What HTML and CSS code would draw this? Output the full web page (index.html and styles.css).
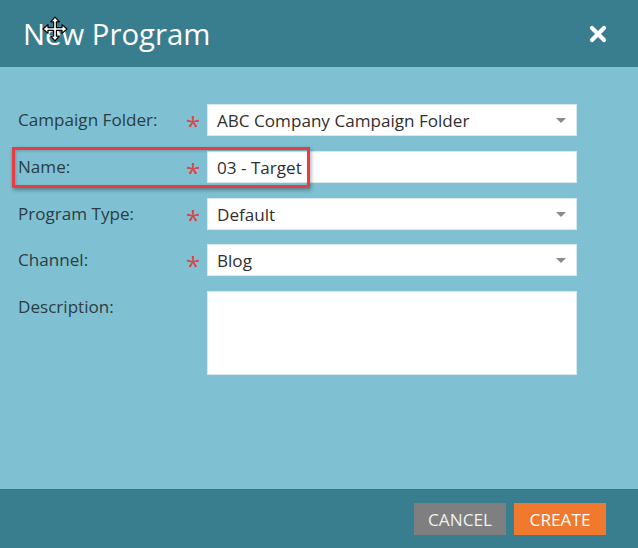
FILE: index.html
```html
<!DOCTYPE html>
<html>
<head>
<meta charset="utf-8">
<link rel="stylesheet" href="styles.css">
</head>
<body>
<div class="dialog">
  <div class="header">
    <h1 class="title">New Program</h1>
    <svg class="close" viewBox="0 0 18 18" width="18" height="18"><path d="M3 3 L15 15 M15 3 L3 15" stroke="#fff" stroke-width="4.2" stroke-linecap="round"/></svg>
    <svg class="cursor" viewBox="0 0 24 24" width="26" height="26">
      <path d="M12 1 L16 5.5 L13.3 5.5 L13.3 10.7 L18.5 10.7 L18.5 8 L23 12 L18.5 16 L18.5 13.3 L13.3 13.3 L13.3 18.5 L16 18.5 L12 23 L8 18.5 L10.7 18.5 L10.7 13.3 L5.5 13.3 L5.5 16 L1 12 L5.5 8 L5.5 10.7 L10.7 10.7 L10.7 5.5 L8 5.5 Z" fill="#fff" stroke="#000" stroke-width="1.1" stroke-linejoin="round"/>
    </svg>
  </div>
  <div class="body">
    <div class="row">
      <label class="label">Campaign Folder:</label>
      <span class="req">*</span>
      <div class="field select">ABC Company Campaign Folder<span class="arrow"></span></div>
    </div>
    <div class="row name-row">
      <label class="label">Name:</label>
      <span class="req">*</span>
      <div class="field">03 - Target</div>
      <div class="highlight"></div>
    </div>
    <div class="row">
      <label class="label">Program Type:</label>
      <span class="req">*</span>
      <div class="field select">Default<span class="arrow"></span></div>
    </div>
    <div class="row">
      <label class="label">Channel:</label>
      <span class="req">*</span>
      <div class="field select">Blog<span class="arrow"></span></div>
    </div>
    <div class="row desc-row">
      <label class="label">Description:</label>
      <span class="req"></span>
      <div class="field textarea"></div>
    </div>
  </div>
  <div class="footer">
    <button class="btn cancel">CANCEL</button>
    <button class="btn create">CREATE</button>
  </div>
</div>
</body>
</html>
```
FILE: styles.css
```css
html, body {
  margin: 0;
  padding: 0;
}
body {
  font-family: "Open Sans", "Liberation Sans", sans-serif;
  background: #7fc1d2;
}
.dialog {
  width: 638px;
  height: 548px;
  display: flex;
  flex-direction: column;
  background: #7fc1d2;
}
.header {
  position: relative;
  height: 67px;
  background: #387e8f;
  display: flex;
  align-items: center;
  justify-content: space-between;
  padding: 0 31px 0 23px;
  box-sizing: border-box;
}
.title {
  margin: 0;
  font-weight: 400;
  font-size: 29.3px;
  color: #fff;
  line-height: 1;
  padding-top: 2px;
}
.close {
  display: block;
}
.cursor {
  position: absolute;
  left: 42px;
  top: 16px;
}
.body {
  flex: 1;
  padding: 37px 61px 0 18px;
  display: flex;
  flex-direction: column;
  gap: 14.8px;
}
.row {
  position: relative;
  display: grid;
  grid-template-columns: 168px 21px 1fr;
  align-items: start;
}
.label {
  font-size: 17.1px;
  color: #2b3d42;
  line-height: 32px;
  margin-top: 0;
}
.req {
  color: #d9474a;
  font-size: 26px;
  line-height: 36px;
  height: 36px;
  margin-top: 3px;
  margin-bottom: -7px;
}
.field {
  position: relative;
  height: 32px;
  background: #fff;
  border: 1px solid #d4eaf0;
  box-sizing: border-box;
  font-size: 17.1px;
  color: #2f2f2f;
  line-height: 31px;
  padding-left: 9px;
}
.arrow {
  position: absolute;
  right: 10px;
  top: 13px;
  width: 0;
  height: 0;
  border-left: 5px solid transparent;
  border-right: 5px solid transparent;
  border-top: 5px solid #8a8a8a;
}
.textarea {
  height: 84px;
}
.highlight {
  position: absolute;
  left: -6px;
  top: -4px;
  width: 298px;
  height: 41px;
  border: 3px solid #ea3b43;
  box-sizing: border-box;
  box-shadow: 1px 2px 4px rgba(0, 0, 0, 0.35), inset 1px 1px 3px rgba(0, 0, 0, 0.2);
  pointer-events: none;
}
.footer {
  height: 59px;
  background: #387e8f;
  border-top: 1px solid #33788a;
  box-sizing: border-box;
  display: flex;
  justify-content: flex-end;
  align-items: flex-start;
  gap: 8px;
  padding: 13px 32px 0 0;
}
.btn {
  width: 92px;
  height: 32px;
  border: none;
  font-family: "Open Sans", "Liberation Sans", sans-serif;
  font-size: 17.2px;
  color: #fff;
  padding: 0;
}
.cancel {
  background: #7f7f7f;
  color: #f0f0f0;
}
.create {
  background: #f1792e;
}
```
